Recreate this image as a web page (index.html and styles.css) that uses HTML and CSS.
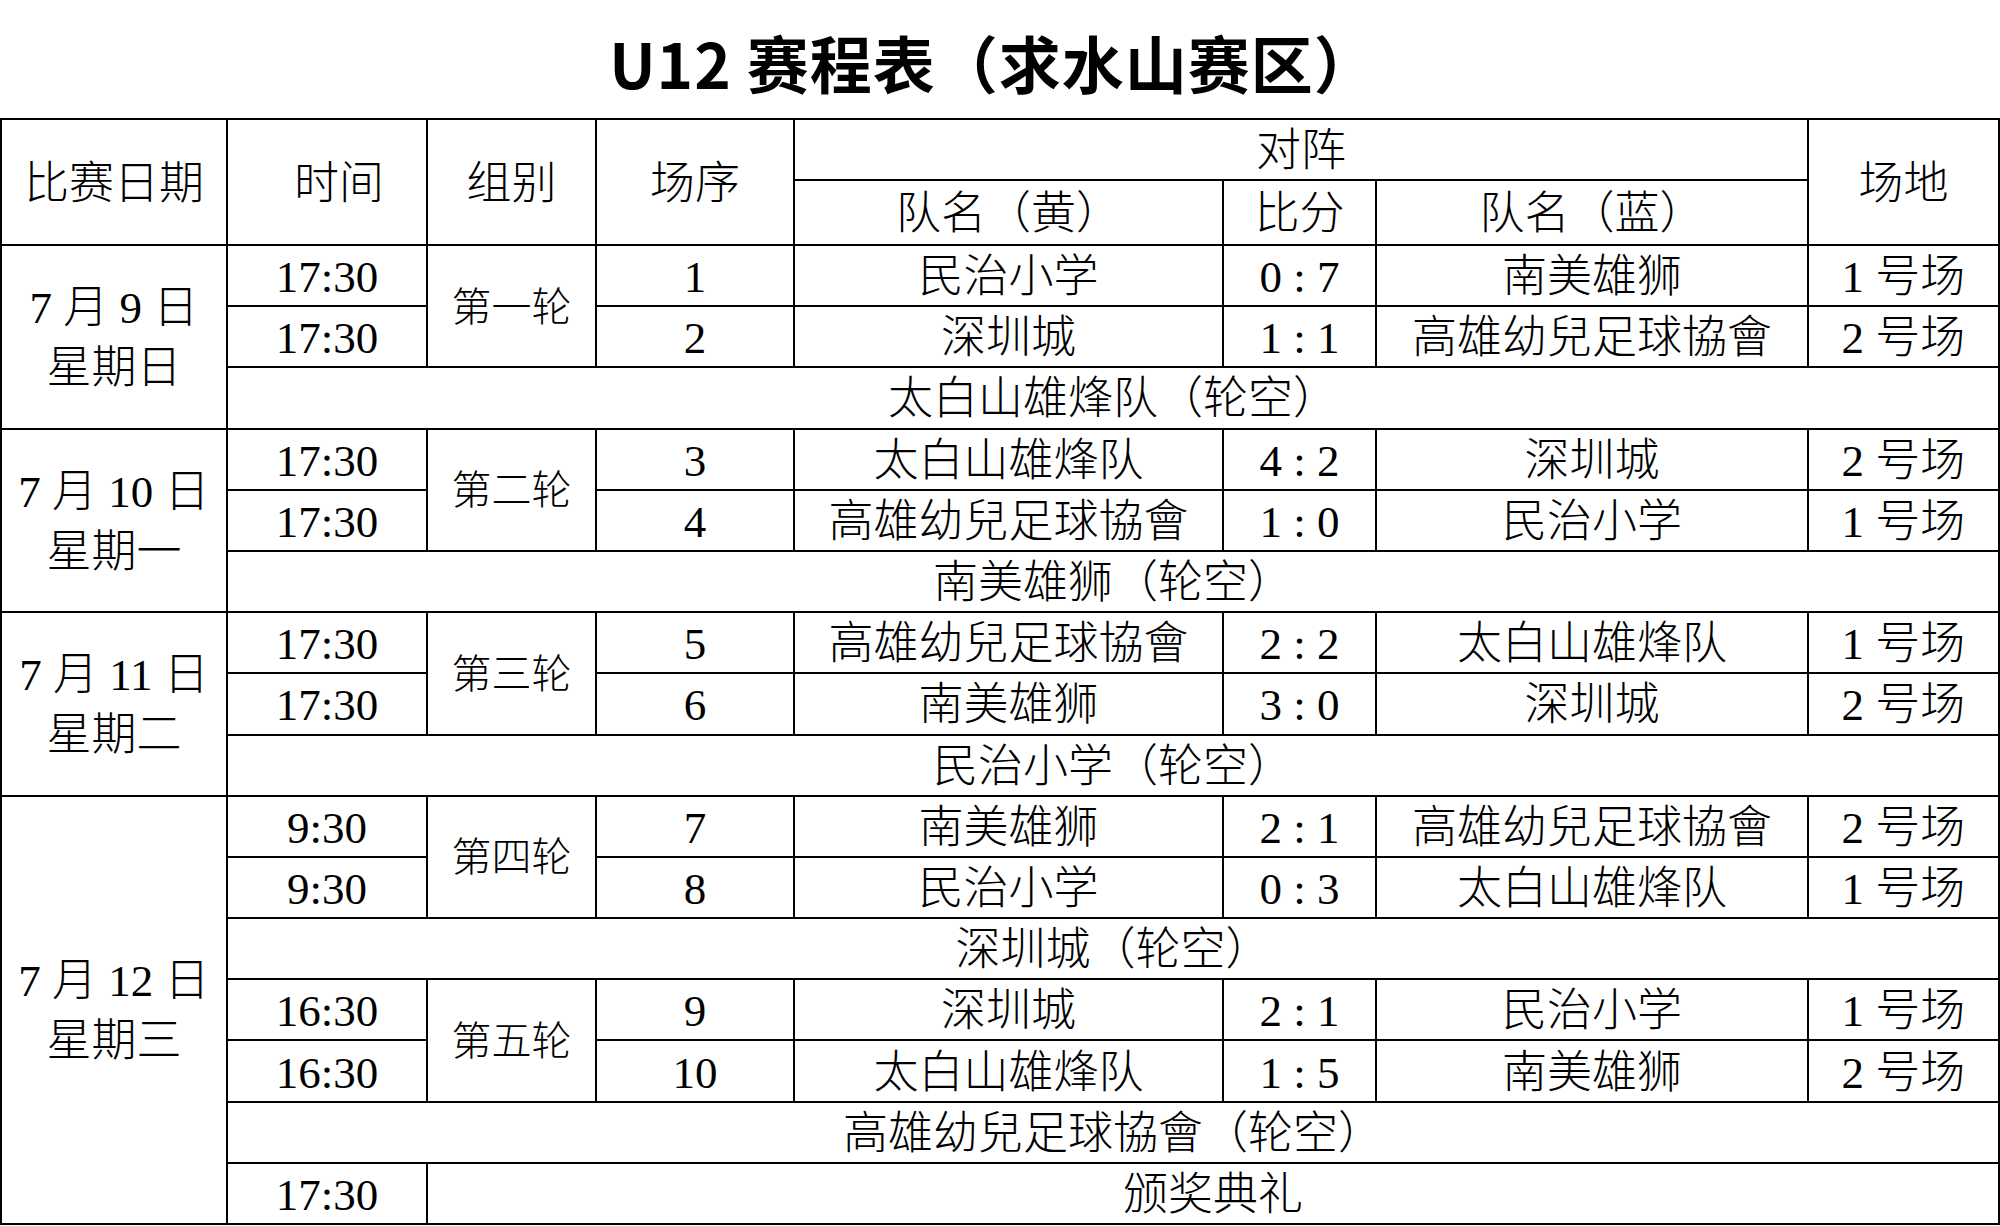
FILE: index.html
```html
<!DOCTYPE html>
<html lang="zh-CN">
<head>
<meta charset="utf-8">
<title>U12 赛程表（求水山赛区）</title>
<link rel="stylesheet" href="styles.css">
</head>
<body>
<h1 class="title">U12 赛程表（求水山赛区）</h1>
<table class="schedule">
  <colgroup>
    <col class="c-date"><col class="c-time"><col class="c-group"><col class="c-no">
    <col class="c-team"><col class="c-score"><col class="c-team2"><col class="c-venue">
  </colgroup>
  <thead>
    <tr class="h1">
      <th rowspan="2">比赛日期</th>
      <th rowspan="2" class="th-time">时间</th>
      <th rowspan="2">组别</th>
      <th rowspan="2">场序</th>
      <th colspan="3">对阵</th>
      <th rowspan="2">场地</th>
    </tr>
    <tr class="h2">
      <th>队名（黄）</th>
      <th>比分</th>
      <th>队名（蓝）</th>
    </tr>
  </thead>
  <tbody>
    <tr>
      <td rowspan="3" class="date">7 月 9 日<br>星期日</td>
      <td>17:30</td><td rowspan="2" class="round">第一轮</td><td>1</td>
      <td>民治小学</td><td>0 : 7</td><td>南美雄狮</td><td>1 号场</td>
    </tr>
    <tr>
      <td>17:30</td><td>2</td>
      <td>深圳城</td><td>1 : 1</td><td>高雄幼兒足球協會</td><td>2 号场</td>
    </tr>
    <tr><td colspan="7" class="bye">太白山雄烽队（轮空）</td></tr>

    <tr>
      <td rowspan="3" class="date">7 月 10 日<br>星期一</td>
      <td>17:30</td><td rowspan="2" class="round">第二轮</td><td>3</td>
      <td>太白山雄烽队</td><td>4 : 2</td><td>深圳城</td><td>2 号场</td>
    </tr>
    <tr>
      <td>17:30</td><td>4</td>
      <td>高雄幼兒足球協會</td><td>1 : 0</td><td>民治小学</td><td>1 号场</td>
    </tr>
    <tr><td colspan="7" class="bye">南美雄狮（轮空）</td></tr>

    <tr>
      <td rowspan="3" class="date">7 月 11 日<br>星期二</td>
      <td>17:30</td><td rowspan="2" class="round">第三轮</td><td>5</td>
      <td>高雄幼兒足球協會</td><td>2 : 2</td><td>太白山雄烽队</td><td>1 号场</td>
    </tr>
    <tr>
      <td>17:30</td><td>6</td>
      <td>南美雄狮</td><td>3 : 0</td><td>深圳城</td><td>2 号场</td>
    </tr>
    <tr><td colspan="7" class="bye">民治小学（轮空）</td></tr>

    <tr>
      <td rowspan="7" class="date">7 月 12 日<br>星期三</td>
      <td>9:30</td><td rowspan="2" class="round">第四轮</td><td>7</td>
      <td>南美雄狮</td><td>2 : 1</td><td>高雄幼兒足球協會</td><td>2 号场</td>
    </tr>
    <tr>
      <td>9:30</td><td>8</td>
      <td>民治小学</td><td>0 : 3</td><td>太白山雄烽队</td><td>1 号场</td>
    </tr>
    <tr><td colspan="7" class="bye">深圳城（轮空）</td></tr>
    <tr>
      <td>16:30</td><td rowspan="2" class="round">第五轮</td><td>9</td>
      <td>深圳城</td><td>2 : 1</td><td>民治小学</td><td>1 号场</td>
    </tr>
    <tr>
      <td>16:30</td><td>10</td>
      <td>太白山雄烽队</td><td>1 : 5</td><td>南美雄狮</td><td>2 号场</td>
    </tr>
    <tr><td colspan="7" class="bye">高雄幼兒足球協會（轮空）</td></tr>
    <tr>
      <td>17:30</td><td colspan="6">颁奖典礼</td>
    </tr>
  </tbody>
</table>
</body>
</html>
```
FILE: styles.css
```css
html, body {
  margin: 0;
  padding: 0;
  background: #ffffff;
  overflow: hidden;
}

.title {
  margin: 0;
  height: 118px;
  box-sizing: border-box;
  padding-top: 31px;
  padding-right: 14px;
  text-align: center;
  font-family: "Noto Sans CJK SC", sans-serif;
  font-weight: 700;
  font-size: 62px;
  line-height: 62px;
  letter-spacing: 1px;
  color: #000;
}

.schedule {
  width: 2000px;
  table-layout: fixed;
  border-collapse: collapse;
  font-family: "Liberation Serif", "Noto Sans CJK SC", serif;
  font-size: 45px;
  font-weight: 300;
  color: #000;
}

.c-date { width: 226px; }
.c-time { width: 200px; }
.c-group { width: 169px; }
.c-no { width: 198px; }
.c-team { width: 429px; }
.c-score { width: 153px; }
.c-team2 { width: 432px; }
.c-venue { width: 191px; }

.schedule th,
.schedule td {
  border: 2px solid #000;
  padding: 3px 0 0;
  text-align: center;
  vertical-align: middle;
  font-weight: 300;
  white-space: nowrap;
  line-height: 1.2;
}

.schedule tr { height: 61.2px; }
.schedule tr.h1 { height: 61px; }
.schedule tr.h2 { height: 65px; }

.schedule th.th-time { padding-left: 24px; }

.schedule td.date { line-height: 60px; }
.schedule td.round { font-size: 40px; }
```
